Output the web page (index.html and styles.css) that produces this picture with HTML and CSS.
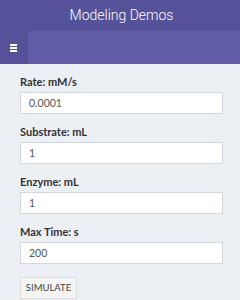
FILE: index.html
```html
<!DOCTYPE html>
<html lang="en">
<head>
  <meta charset="UTF-8" />
  <meta name="viewport" content="width=device-width, initial-scale=1.0"/>
  <title>Modeling Demos</title>
  <link rel="stylesheet" href="styles.css">
</head>
<body>
  <header class="main-header">
    <div class="logo">Modeling Demos</div>
    <nav class="navbar">
      <a class="sidebar-toggle" href="#">
        <span class="bar"></span>
        <span class="bar"></span>
        <span class="bar"></span>
      </a>
    </nav>
  </header>
  <div class="content">
    <form id="simForm">
      <div class="form-group">
        <label for="rate">Rate: mM/s</label>
        <input type="text" id="rate" value="0.0001" />
      </div>
      <div class="form-group">
        <label for="substrate">Substrate: mL</label>
        <input type="text" id="substrate" value="1" />
      </div>
      <div class="form-group">
        <label for="enzyme">Enzyme: mL</label>
        <input type="text" id="enzyme" value="1" />
      </div>
      <div class="form-group">
        <label for="maxTime">Max Time: s</label>
        <input type="text" id="maxTime" value="200" />
      </div>
      <button type="submit" class="btn">Simulate</button>
    </form>
  </div>
</body>
</html>
```

FILE: styles.css
```css
body {
  margin: 0;
  padding: 0;
  background-color: #ecf0f5;
  font-family: Lato, "Open Sans", sans-serif;
  color: #333;
}
.main-header .logo {
  height: 31px;
  line-height: 30px;
  background-color: #555299;
  color: #fff;
  text-align: center;
  font-family: Roboto, sans-serif;
  font-weight: 300;
  font-size: 14px;
  padding-left: 3px;
}
.navbar {
  display: flex;
  height: 33px;
  background-color: #605ca8;
}
.sidebar-toggle {
  display: flex;
  flex-direction: column;
  justify-content: center;
  align-items: center;
  gap: 1px;
  width: 28px;
  background-color: #555299;
}
.sidebar-toggle .bar {
  display: block;
  width: 7px;
  height: 2px;
  background-color: #fff;
  margin-left: -1px;
}
.content {
  padding: 11px 17px 0 20px;
}
.form-group {
  margin-bottom: 11px;
}
.form-group label {
  display: block;
  font-size: 11px;
  line-height: 14px;
  font-weight: bold;
  margin-bottom: 3px;
}
.form-group input {
  display: block;
  box-sizing: border-box;
  width: 100%;
  height: 22px;
  padding: 0 8px;
  border: 1px solid #d2d6de;
  border-radius: 0;
  background-color: #fff;
  font-family: Lato, "Open Sans", sans-serif;
  font-size: 10.5px;
  color: #555;
}
.btn {
  margin-top: 1px;
  height: 22px;
  width: 57px;
  padding: 0;
  background-color: #f4f4f4;
  border: 1px solid #ddd;
  border-radius: 0;
  color: #444;
  font-family: Lato, "Open Sans", sans-serif;
  font-size: 9.5px;
  text-transform: uppercase;
  cursor: pointer;
}
```
